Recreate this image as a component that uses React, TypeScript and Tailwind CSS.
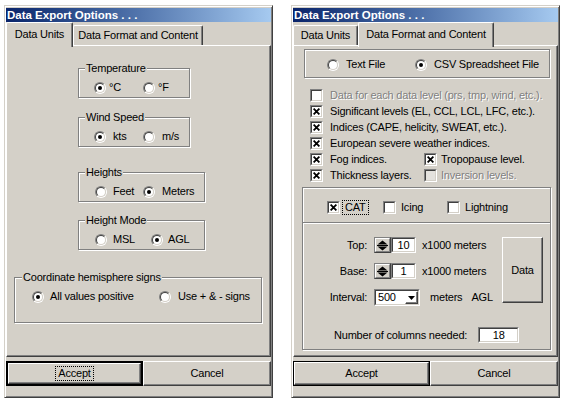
import React from 'react';

const RAISED =
  'border border-t-white border-l-white border-r-[#404040] border-b-[#404040] shadow-[inset_-1px_-1px_0_#808080]';
const ETCH = 'border border-[#808080] shadow-[inset_1px_1px_0_#fff,1px_1px_0_#fff]';
const DISABLED = 'text-[#808080] [text-shadow:1px_1px_0_#fff]';

function Sunken({
  className = '',
  inner = '',
  children,
}: {
  className?: string;
  inner?: string;
  children?: React.ReactNode;
}) {
  return (
    <div className={`border border-t-[#808080] border-l-[#808080] border-r-white border-b-white ${className}`}>
      <div
        className={`h-full w-full border border-t-[#404040] border-l-[#404040] border-r-[#d4d0c8] border-b-[#d4d0c8] ${inner}`}
      >
        {children}
      </div>
    </div>
  );
}

function Radio({
  checked = false,
  label,
  className = '',
  gap = 'gap-[6px]',
}: {
  checked?: boolean;
  label: string;
  className?: string;
  gap?: string;
}) {
  return (
    <div className={`flex items-center h-[13px] ${gap} ${className}`}>
      <div className="w-[12px] h-[12px] shrink-0 rounded-full border border-t-[#808080] border-l-[#808080] border-r-white border-b-white">
        <div className="w-full h-full rounded-full bg-white border border-t-[#404040] border-l-[#404040] border-r-[#d4d0c8] border-b-[#d4d0c8] flex items-center justify-center">
          {checked && <div className="w-[4px] h-[4px] rounded-full bg-black" />}
        </div>
      </div>
      <span className="whitespace-nowrap">{label}</span>
    </div>
  );
}

function Check({ checked = false, bg = 'bg-white' }: { checked?: boolean; bg?: string }) {
  return (
    <Sunken className="w-[13px] h-[13px] shrink-0" inner={`${bg} flex items-center justify-center`}>
      {checked && (
        <svg width="7" height="7" viewBox="0 0 7 7">
          <path d="M0.6 0.6L6.4 6.4M6.4 0.6L0.6 6.4" stroke="black" strokeWidth="1.8" />
        </svg>
      )}
    </Sunken>
  );
}

function CheckItem({
  checked = false,
  disabled = false,
  label,
  className = '',
  gap = 'gap-[7px]',
  bg,
}: {
  checked?: boolean;
  disabled?: boolean;
  label: string;
  className?: string;
  gap?: string;
  bg?: string;
}) {
  return (
    <div className={`flex items-center ${gap} ${className}`}>
      <Check checked={checked} bg={bg} />
      <span className={`whitespace-nowrap ${disabled ? DISABLED : ''}`}>{label}</span>
    </div>
  );
}

function GroupBox({
  label,
  className = '',
  labelClass = 'ml-[6px]',
  children,
}: {
  label: string;
  className?: string;
  labelClass?: string;
  children?: React.ReactNode;
}) {
  return (
    <div className={`${ETCH} ${className}`}>
      <div className={`-mt-[7px] w-fit px-[1px] bg-[#d4d0c8] leading-[13px] whitespace-nowrap ${labelClass}`}>
        {label}
      </div>
      {children}
    </div>
  );
}

function TitleBar() {
  return (
    <div className="h-[14px] bg-linear-to-r from-[#0a246a] to-[#a6caf0] text-white font-bold text-[11.5px] tracking-normal leading-[14px] pl-[1px] whitespace-nowrap">
      Data Export Options . . .
    </div>
  );
}

function Tab({ label, active, width }: { label: string; active?: boolean; width: string }) {
  if (active) {
    return (
      <div
        className={`relative z-10 -mb-[2px] h-[25px] ${width} bg-[#d4d0c8] border-t border-l border-r border-t-white border-l-white border-r-[#404040] shadow-[inset_-1px_0_0_#808080] rounded-t-[2px] pt-[5px] text-center whitespace-nowrap`}
      >
        {label}
      </div>
    );
  }
  return (
    <div
      className={`h-[20px] ${width} border-t border-l border-r border-t-white border-l-white border-r-[#404040] shadow-[inset_-1px_0_0_#808080] rounded-t-[2px] pt-[3px] text-center whitespace-nowrap`}
    >
      {label}
    </div>
  );
}

function Buttons({ focused, acceptWidth }: { focused?: boolean; acceptWidth: string }) {
  return (
    <div className="mt-[4px] flex h-[25px]">
      <div className={`${acceptWidth} h-full border-black ${focused ? 'border-2' : 'border'}`}>
        <div className={`h-full ${RAISED} flex items-center justify-center`}>
          {focused ? (
            <span className="border border-dotted border-black px-[2px] leading-[13px]">Accept</span>
          ) : (
            <span>Accept</span>
          )}
        </div>
      </div>
      <div className={`flex-1 h-full ${RAISED} flex items-center justify-center`}>Cancel</div>
    </div>
  );
}

function Dialog({ children }: { children: React.ReactNode }) {
  return (
    <div className="w-[269px] h-[393px] bg-[#d4d0c8] border border-t-[#d4d0c8] border-l-[#d4d0c8] border-r-[#404040] border-b-[#404040] shadow-[inset_1px_1px_0_#fff,inset_-1px_-1px_0_#808080] px-[1px] pt-[2px] flex flex-col">
      {children}
    </div>
  );
}

const PANEL = `h-[312px] ${RAISED} flex flex-col`;

function Spin({ value }: { value: string }) {
  return (
    <div className="ml-[7px] flex h-[16px]">
      <div className="w-[17px] h-full border border-[#404040] border-t-[#808080] border-l-[#808080]">
        <div className="w-full h-full border border-t-white border-l-white border-r-[#808080] border-b-[#808080] flex items-center justify-center">
          <svg width="11" height="11" viewBox="0 0 11 11">
            <path d="M0.5 4.5L5.5 0.5L10.5 4.5Z" fill="black" />
            <rect x="0" y="5" width="11" height="1" fill="black" />
            <path d="M0.5 6.5L5.5 10.5L10.5 6.5Z" fill="black" />
          </svg>
        </div>
      </div>
      <Sunken className="w-[25px] h-full" inner="bg-white flex items-center justify-center leading-[12px]">
        {value}
      </Sunken>
    </div>
  );
}

function UnitsDialog() {
  return (
    <Dialog>
      <TitleBar />
      <div className="flex items-end h-[23px]">
        <Tab label="Data Units" active width="w-[67px]" />
        <Tab label="Data Format and Content" width="w-[130px]" />
      </div>
      <div className={PANEL}>
        <GroupBox label="Temperature" className="ml-[71px] mt-[22px] w-[112px] h-[30px]">
          <div className="mt-[6px] pl-[15px] flex">
            <Radio checked label="°C" gap="gap-[3px]" className="w-[49px]" />
            <Radio label="°F" gap="gap-[3px]" />
          </div>
        </GroupBox>
        <GroupBox label="Wind Speed" className="ml-[71px] mt-[19px] w-[112px] h-[30px]">
          <div className="mt-[6px] pl-[15px] flex">
            <Radio checked label="kts" gap="gap-[7px]" className="w-[49px]" />
            <Radio label="m/s" gap="gap-[7px]" />
          </div>
        </GroupBox>
        <GroupBox label="Heights" className="ml-[71px] mt-[25px] w-[127px] h-[30px]">
          <div className="mt-[6px] pl-[16px] flex">
            <Radio label="Feet" gap="gap-[6px]" className="w-[48px]" />
            <Radio checked label="Meters" gap="gap-[7px]" />
          </div>
        </GroupBox>
        <GroupBox label="Height Mode" className="ml-[71px] mt-[18px] w-[127px] h-[30px]">
          <div className="mt-[6px] pl-[16px] flex">
            <Radio label="MSL" gap="gap-[6px]" className="w-[56px]" />
            <Radio checked label="AGL" gap="gap-[5px]" />
          </div>
        </GroupBox>
        <GroupBox
          label="Coordinate hemisphere signs"
          labelClass="ml-[7px]"
          className="ml-[7px] mt-[27px] w-[248px] h-[46px]"
        >
          <div className="mt-[6px] pl-[17px] flex">
            <Radio checked label="All values positive" gap="gap-[6px]" className="w-[127px]" />
            <Radio label="Use + & - signs" gap="gap-[7px]" />
          </div>
        </GroupBox>
      </div>
      <Buttons focused acceptWidth="w-[137px]" />
    </Dialog>
  );
}

function FormatDialog() {
  return (
    <Dialog>
      <TitleBar />
      <div className="flex items-end h-[23px]">
        <Tab label="Data Units" width="w-[65px]" />
        <Tab label="Data Format and Content" active width="w-[136px]" />
      </div>
      <div className={PANEL}>
        <div className={`${ETCH} ml-[10px] mt-[3px] w-[246px] h-[29px]`}>
          <div className="pt-[8px] pl-[22px] flex">
            <Radio label="Text File" gap="gap-[7px]" className="w-[88px]" />
            <Radio checked label="CSV Spreadsheet File" gap="gap-[7px]" />
          </div>
        </div>

        <div className="ml-[16px] mt-[9px] flex flex-col">
          <div className="h-[16px] flex items-center">
            <CheckItem disabled label="Data for each data level (prs, tmp, wind, etc.)." />
          </div>
          <div className="h-[16px] flex items-center">
            <CheckItem checked label="Significant levels (EL, CCL, LCL, LFC, etc.)." />
          </div>
          <div className="h-[16px] flex items-center">
            <CheckItem checked label="Indices (CAPE, helicity, SWEAT, etc.)." />
          </div>
          <div className="h-[16px] flex items-center">
            <CheckItem checked label="European severe weather indices." />
          </div>
          <div className="h-[16px] flex items-center">
            <CheckItem checked label="Fog indices." className="w-[114px]" />
            <CheckItem checked label="Tropopause level." gap="gap-[4px]" />
          </div>
          <div className="h-[16px] flex items-center">
            <CheckItem checked label="Thickness layers." className="w-[114px]" />
            <CheckItem disabled label="Inversion levels." gap="gap-[4px]" bg="bg-[#e4e2de]" />
          </div>
        </div>

        <div className={`${ETCH} ml-[8px] mt-[4px] w-[249px] h-[163px] flex flex-col`}>
          <div className="h-[34px] pt-[12px] pl-[24px] flex items-start">
            <div className="w-[56px] flex items-center gap-[2px]">
              <Check checked />
              <span className="border border-dotted border-black px-[2px] leading-[13px]">CAT</span>
            </div>
            <div className="w-[64px] h-[15px] flex items-center">
              <CheckItem label="Icing" gap="gap-[5px]" />
            </div>
            <div className="h-[15px] flex items-center">
              <CheckItem label="Lightning" gap="gap-[5px]" />
            </div>
          </div>
          <div className="h-[2px] border-t border-b border-t-[#808080] border-b-white" />

          <div className="mt-[13px] flex">
            <div className="flex flex-col gap-[10px]">
              <div className="h-[16px] flex items-center">
                <span className="w-[64px] text-right">Top:</span>
                <Spin value="10" />
                <span className="ml-[6px] whitespace-nowrap">x1000 meters</span>
              </div>
              <div className="h-[16px] flex items-center">
                <span className="w-[64px] text-right">Base:</span>
                <Spin value="1" />
                <span className="ml-[6px] whitespace-nowrap">x1000 meters</span>
              </div>
              <div className="h-[17px] flex items-center">
                <span className="w-[64px] text-right">Interval:</span>
                <Sunken className="ml-[7px] w-[46px] h-[17px]" inner="flex bg-white">
                  <span className="flex-1 pl-[2px] flex items-center leading-[13px]">500</span>
                  <div className={`w-[13px] h-full ${RAISED} flex items-center justify-center`}>
                    <svg width="7" height="4" viewBox="0 0 7 4">
                      <path d="M0 0H7L3.5 4Z" fill="black" />
                    </svg>
                  </div>
                </Sunken>
                <span className="ml-[10px]">meters</span>
                <span className="ml-[9px]">AGL</span>
              </div>
            </div>
            <div className={`ml-auto mr-[7px] w-[41px] h-[66px] ${RAISED} flex items-center justify-center`}>
              Data
            </div>
          </div>

          <div className="mt-[21px] pl-[31px] flex items-center">
            <span className="whitespace-nowrap">Number of columns needed:</span>
            <Sunken className="ml-[11px] w-[41px] h-[16px]" inner="bg-white flex items-center justify-center leading-[12px]">
              18
            </Sunken>
          </div>
        </div>
      </div>
      <Buttons acceptWidth="w-[137px]" />
    </Dialog>
  );
}

export default function App() {
  return (
    <div className="w-[564px] h-[402px] bg-white flex items-start gap-[18px] pl-[4px] pt-[5px] font-['Liberation_Sans',Arial,sans-serif] text-[11px] tracking-[-0.2px] leading-[13px] text-black">
      <UnitsDialog />
      <FormatDialog />
    </div>
  );
}
